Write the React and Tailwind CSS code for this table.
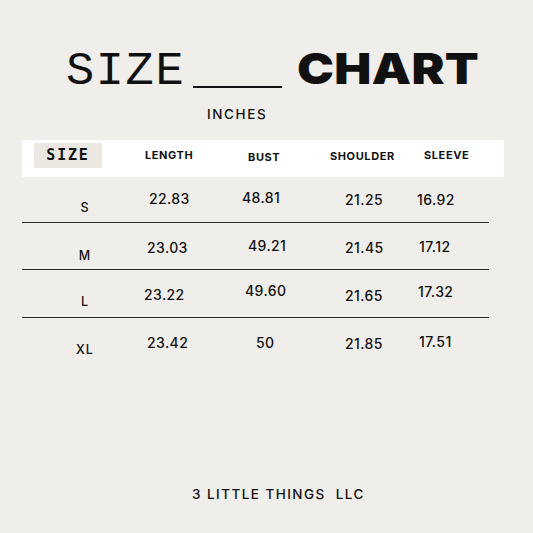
import React from "react";

const rows = [
  {
    size: "S",
    h: "h-[46px]",
    sizeCls: "pt-[25px]",
    cells: [
      ["22.83", "pl-[9px] pt-[15px]"],
      ["48.81", "pl-[7px] pt-[14px]"],
      ["21.25", "pl-[20px] pt-[16px]"],
      ["16.92", "pl-[12px] pt-[16px]"],
    ],
  },
  {
    size: "M",
    h: "h-[47px]",
    sizeCls: "pt-[27px]",
    cells: [
      ["23.03", "pl-[7px] pt-[18px]"],
      ["49.21", "pl-[13px] pt-[16px]"],
      ["21.45", "pl-[20px] pt-[18px]"],
      ["17.12", "pl-[14px] pt-[17px]"],
    ],
  },
  {
    size: "L",
    h: "h-[48px]",
    sizeCls: "pt-[26px]",
    cells: [
      ["23.22", "pl-[4px] pt-[18px]"],
      ["49.60", "pl-[10px] pt-[14px]"],
      ["21.65", "pl-[20px] pt-[19px]"],
      ["17.32", "pl-[13px] pt-[15px]"],
    ],
  },
  {
    size: "XL",
    h: "h-[48px]",
    sizeCls: "pt-[26px]",
    cells: [
      ["23.42", "pl-[7px] pt-[18px]"],
      ["50", "pl-[21px] pt-[18px]"],
      ["21.85", "pl-[20px] pt-[19px]"],
      ["17.51", "pl-[14px] pt-[17px]"],
    ],
  },
];

export default function App() {
  return (
    <div className="w-[533px] h-[533px] bg-[#f0eeea] flex flex-col text-[#111] font-['Inter',sans-serif] overflow-hidden">
      {/* Title */}
      <div className="mt-[48px] pl-[66px] flex items-start h-[47px]">
        <div className="w-[127px] font-['Liberation_Mono',monospace] text-[47px] leading-[47px] tracking-[1.6px]">
          SIZE
        </div>
        <div className="w-[89px] h-[2px] bg-[#111] mt-[38px]" />
        <div className="ml-[15px] -mt-[1px] font-['Inter',sans-serif] font-black text-[43px] leading-[43px] origin-left scale-x-[1.15] tracking-[0.3px]">
          CHART
        </div>
      </div>

      <div className="mt-[12px] pl-[207px] text-[13.5px] leading-[14px] font-medium tracking-[1.6px]">
        INCHES
      </div>

      {/* Header bar */}
      <div className="mt-[19px] ml-[22px] w-[482px] h-[37px] bg-white grid grid-cols-[118px_95px_90px_80px_99px] text-[11px] leading-[11px] font-bold tracking-[0.6px]">
        <div className="pl-[12px] pt-[3px]">
          <div className="w-[68px] h-[25px] bg-[#ebe8e2] flex items-center justify-center font-['DejaVu_Sans_Mono',monospace] font-bold text-[15px] tracking-[1.8px]">
            SIZE
          </div>
        </div>
        <div className="pl-[5px] pt-[10px]">LENGTH</div>
        <div className="pl-[13px] pt-[12px]">BUST</div>
        <div className="pl-[5px] pt-[11px]">SHOULDER</div>
        <div className="pl-[19px] pt-[10px]">SLEEVE</div>
      </div>

      {/* Rows */}
      <div className="ml-[22px] w-[467px] flex flex-col">
        {rows.map((r, i) => (
          <div
            key={r.size}
            className={`${r.h} grid grid-cols-[118px_95px_90px_80px_84px] ${
              i < rows.length - 1 ? "border-b border-[#2a2a2a]" : ""
            }`}
          >
            <div className={`pl-[8px] text-center text-[12.5px] leading-[12.5px] font-medium tracking-[1px] ${r.sizeCls}`}>
              {r.size}
            </div>
            {r.cells.map(([v, cls], j) => (
              <div key={j} className={`text-[14px] leading-[14px] font-medium tracking-[0.4px] ${cls}`}>
                {v}
              </div>
            ))}
          </div>
        ))}
      </div>

      {/* Footer */}
      <div className="mt-auto mb-[32px] pl-[192px] text-[13.5px] leading-[14px] font-medium tracking-[1.45px] whitespace-pre">
        3 LITTLE THINGS  LLC
      </div>
    </div>
  );
}
